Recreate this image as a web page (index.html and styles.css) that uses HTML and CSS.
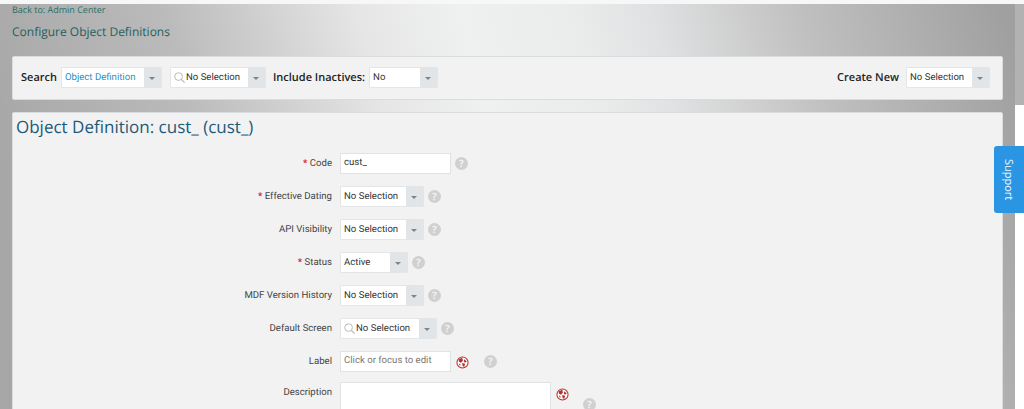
FILE: index.html
```html
<!DOCTYPE html>
<html lang="en">
<head>
<meta charset="utf-8">
<title>Configure Object Definitions</title>
<link rel="stylesheet" href="styles.css">
</head>
<body>
<svg class="defs" width="0" height="0" aria-hidden="true">
  <symbol id="lens" viewBox="0 0 12 12"><circle cx="5" cy="5" r="4.2" fill="none" stroke="#b4b4b4" stroke-width="1"/><path d="M8 8 11.6 11.6" stroke="#b4b4b4" stroke-width="1.2"/></symbol>
  <symbol id="globe" viewBox="0 0 14 14"><circle cx="7" cy="7" r="6" fill="#fff" stroke="#b5302c" stroke-width="1.1"/><path d="M3 3.6 6.8 2 7.4 5 5.4 7.2 3 6ZM9 3.4 11.6 6 9.6 7.4 8.4 5.6ZM6.6 7.6 9.8 8.4 9 11.6 7.2 11ZM3.2 8 4.8 8.8 4.8 10.4 3.6 9.6Z" fill="#b5302c"/></symbol>
</svg>
<div class="page">
  <main class="content">
    <nav class="crumbs"><a class="back">Back to: Admin Center</a></nav>
    <h1 class="title">Configure Object Definitions</h1>

    <section class="toolbar panel">
      <span class="tool-label">Search</span>
      <div class="select w-obj"><span class="value value-link">Object Definition</span><span class="arrow"></span></div>
      <div class="select w-find"><svg class="lens"><use href="#lens"/></svg><span class="value">No Selection</span><span class="arrow"></span></div>
      <span class="tool-label">Include Inactives:</span>
      <div class="select w-no"><span class="value">No</span><span class="arrow"></span></div>
      <span class="tool-label push">Create New</span>
      <div class="select w-new"><span class="value">No Selection</span><span class="arrow"></span></div>
    </section>

    <section class="detail panel">
      <h2 class="detail-title">Object Definition: cust_ (cust_)</h2>
      <div class="form">
        <div class="row">
          <label class="label"><span class="req">*</span> Code</label>
          <div class="input">cust_</div>
          <span class="help">?</span>
        </div>
        <div class="row">
          <label class="label"><span class="req">*</span> Effective Dating</label>
          <div class="select w-field"><span class="value">No Selection</span><span class="arrow"></span></div>
          <span class="help">?</span>
        </div>
        <div class="row">
          <label class="label">API Visibility</label>
          <div class="select w-field"><span class="value">No Selection</span><span class="arrow"></span></div>
          <span class="help">?</span>
        </div>
        <div class="row">
          <label class="label"><span class="req">*</span> Status</label>
          <div class="select w-status"><span class="value">Active</span><span class="arrow"></span></div>
          <span class="help">?</span>
        </div>
        <div class="row">
          <label class="label">MDF Version History</label>
          <div class="select w-field"><span class="value">No Selection</span><span class="arrow"></span></div>
          <span class="help">?</span>
        </div>
        <div class="row">
          <label class="label">Default Screen</label>
          <div class="select w-screen"><svg class="lens"><use href="#lens"/></svg><span class="value">No Selection</span><span class="arrow"></span></div>
          <span class="help">?</span>
        </div>
        <div class="row">
          <label class="label">Label</label>
          <div class="input placeholder">Click or focus to edit</div>
          <svg class="globe"><use href="#globe"/></svg>
          <span class="help help-far">?</span>
        </div>
        <div class="row row-top">
          <label class="label">Description</label>
          <div class="textarea"></div>
          <svg class="globe"><use href="#globe"/></svg>
          <span class="help help-low">?</span>
        </div>
      </div>
    </section>
  </main>
  <aside class="scrollbar"><div class="thumb"></div></aside>
</div>
<button class="support">Support</button>
</body>
</html>
```
FILE: styles.css
```css
* { box-sizing: border-box; }
html, body { margin: 0; height: 100%; overflow: hidden; }
body {
  font-family: "Roboto", "Open Sans", "Liberation Sans", sans-serif;
  font-size: 9.6px;
  text-rendering: geometricPrecision;
  color: #333;
  background: #f7f7f7;
  padding-top: 4px;
}
.defs { position: absolute; }
.page {
  display: flex;
  height: 405px;
  background: linear-gradient(75deg, #a6a6a6 0%, #a8a8a8 7%, #bbbbbb 24%, #e6e6e6 41%, #eff0f0 50%, #eaebeb 60%, #e0e1e2 67%, #c0c0c0 80%, #a0a0a0 98%);
}
.content {
  flex: 1;
  min-width: 0;
  padding: 0 12px;
}
.crumbs { height: 12px; line-height: 11px; font-family: "Open Sans", sans-serif; }
.back { color: #256f66; font-size: 9px; }
.title {
  margin: 7px 0 0;
  height: 33px;
  font-family: "Open Sans", sans-serif;
  font-size: 12px;
  line-height: 18px;
  font-weight: 400;
  color: #1f5f5c;
}
.panel {
  background: #f2f2f2;
  border: 1px solid #d9dde0;
  border-radius: 2px;
}
.toolbar {
  display: flex;
  align-items: center;
  height: 44px;
  padding: 0 12px 2px 8px;
}
.tool-label {
  font-family: "Open Sans", sans-serif;
  font-size: 11px;
  font-weight: 600;
  color: #222;
  margin-right: 4px;
}
.toolbar .select { margin-right: 8px; }
.toolbar .select:last-child { margin-right: 0; }
.toolbar .w-obj + .select { margin-right: 7px; }
.push { margin-left: auto; margin-right: 7px; }
.select {
  display: flex;
  align-items: stretch;
  height: 21px;
  background: #fff;
  border: 1px solid #e3e6e9;
  border-radius: 1px;
  line-height: 20px;
}
.value { flex: 1; padding-left: 3px; white-space: nowrap; color: #333; }
.value-link { color: #2d8fc4; }
.lens { width: 11px; height: 11px; margin: 4px 0 0 3px; flex: none; }
.lens + .value { padding-left: 1px; }
.arrow {
  flex: none;
  width: 17px;
  background: #e1e5e8;
  position: relative;
}
.arrow::after {
  content: "";
  position: absolute;
  left: 5px;
  top: 9px;
  border: 3px solid transparent;
  border-top: 3px solid #7f8487;
  border-bottom: 0;
}
.w-obj { width: 101px; }
.w-find { width: 96px; }
.w-no { width: 69px; }
.w-new { width: 84px; }
.w-field { width: 84px; }
.w-status { width: 68px; }
.w-screen { width: 97px; }
.detail {
  margin-top: 12px;
  height: 320px;
  padding: 0 3px;
}
.detail-title {
  margin: 0;
  height: 40px;
  font-family: "Open Sans", sans-serif;
  font-size: 17px;
  line-height: 27px;
  font-weight: 400;
  color: #1d5a7a;
}
.form { display: flex; flex-direction: column; gap: 12px; }
.row {
  display: flex;
  align-items: center;
  height: 21px;
  padding-left: 1px;
}
.row-top { align-items: flex-start; margin-top: -2px; height: 60px; }
.label {
  width: 315px;
  flex: none;
  text-align: right;
  color: #444;
  margin-right: 8px;
  padding-bottom: 1px;
}
.req { color: #e0202a; font-weight: 700; }
.input {
  width: 111px;
  height: 21px;
  background: #fff;
  border: 1px solid #e0e3e6;
  line-height: 18px;
  padding-left: 3px;
  color: #333;
}
.placeholder { color: #777; }
.help {
  width: 13px;
  height: 13px;
  margin-left: 4px;
  border-radius: 50%;
  background: #d0d0d0;
  color: #f2f2f2;
  font-family: "Open Sans", sans-serif;
  font-size: 10px;
  font-weight: 700;
  line-height: 13px;
  text-align: center;
  flex: none;
}
.globe { width: 13px; height: 13px; margin: 2px 0 0 5px; flex: none; }
.help-far { margin-left: 15px; }
.textarea {
  width: 211px;
  height: 60px;
  background: #fff;
  border: 1px solid #e0e3e6;
}
.row-top .label { line-height: 18px; padding: 2px 0 0; }
.row-top .globe { margin-top: 6px; }
.help-low { margin: 16px 0 0 14px; }
.scrollbar {
  flex: none;
  width: 9px;
  background: #fff;
}
.thumb { height: 101px; background: #b2b2b2; }
.support {
  position: absolute;
  right: 0;
  top: 146px;
  width: 30px;
  height: 67px;
  padding: 0;
  border: 0;
  border-radius: 3px 0 0 3px;
  background: #2a96e3;
  color: #f0f8fe;
  font: 400 11px "Open Sans", sans-serif;
  writing-mode: vertical-rl;
  text-align: center;
}
```
